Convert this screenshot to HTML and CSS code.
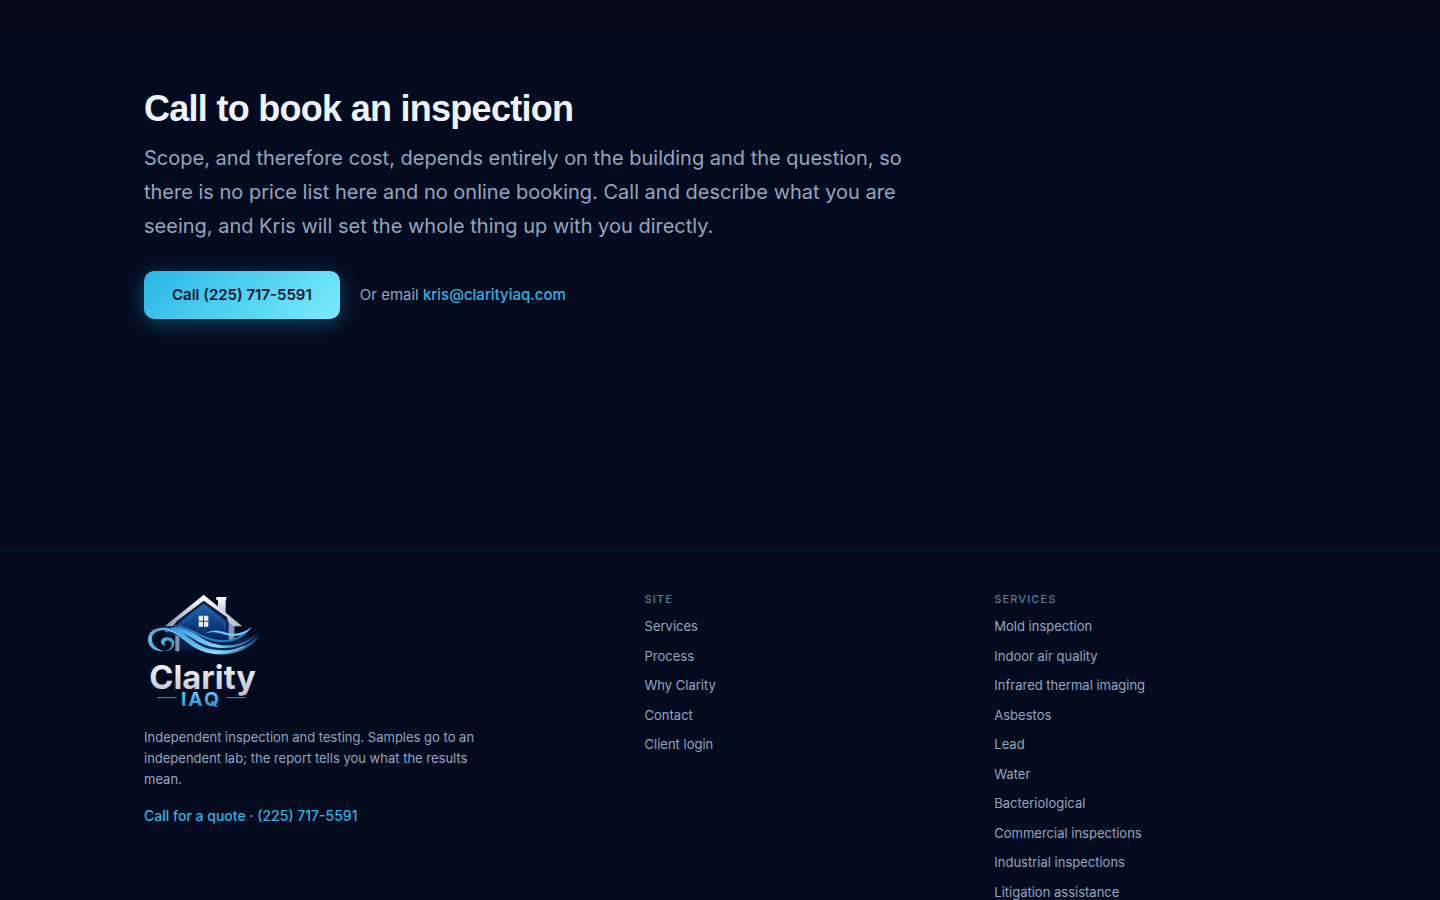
FILE: index.html
```html
<!DOCTYPE html>
<html lang="en">
<head>
<meta charset="utf-8">
<meta name="viewport" content="width=device-width, initial-scale=1">
<title>Clarity IAQ</title>
<link rel="stylesheet" href="styles.css">
</head>
<body>
<main class="cta">
  <div class="wrap">
    <h2 class="cta-title">Call to book an inspection</h2>
    <p class="cta-text">Scope, and therefore cost, depends entirely on the building and the question, so there is no price list here and no online booking. Call and describe what you are seeing, and Kris will set the whole thing up with you directly.</p>
    <div class="cta-row">
      <a class="btn" href="tel:+12257175591">Call (225) 717-5591</a>
      <p class="cta-alt">Or email <a class="accent" href="mailto:kris@clarityiaq.com">kris@clarityiaq.com</a></p>
    </div>
  </div>
</main>
<footer class="footer">
  <div class="wrap footer-grid">
    <div class="brand">
      <svg class="logo" viewBox="42 33 360 360" role="img" aria-label="Clarity IAQ">
        <defs>
          <linearGradient id="silver" x1="0" y1="0" x2="0" y2="1"><stop offset="0" stop-color="#fff"/><stop offset="1" stop-color="#b9bfd0"/></linearGradient>
          <linearGradient id="roof" x1="0" y1="0" x2="1" y2="0"><stop offset="0" stop-color="#7d92b6"/><stop offset=".5" stop-color="#fff"/><stop offset="1" stop-color="#a5b1cb"/></linearGradient>
          <linearGradient id="wall" x1="0" y1="0" x2="0" y2="1"><stop offset="0" stop-color="#2268b4"/><stop offset=".5" stop-color="#0e3a7c"/><stop offset="1" stop-color="#051536"/></linearGradient>
          <linearGradient id="wave" gradientUnits="userSpaceOnUse" x1="54" y1="0" x2="392" y2="0"><stop offset="0" stop-color="#58bdf0"/><stop offset=".25" stop-color="#3f9fdf"/><stop offset=".6" stop-color="#7bd8fb"/><stop offset="1" stop-color="#174f86"/></linearGradient>
          <linearGradient id="sea" x1="0" y1="0" x2="0" y2="1"><stop offset="0" stop-color="#7fe0fc"/><stop offset="1" stop-color="#1181d2"/></linearGradient>
        </defs>
        <path fill="url(#silver)" d="M259 51h30v8h-2v43l-23-22V60h-5z"/>
        <path fill="url(#wall)" d="M221 64l92 72v78H136v-78z"/>
        <path fill="#8292b3" d="M296 124h17v84l-17-8zM136 136h12v78h-12z"/>
        <path fill="url(#roof)" d="M221 44l116 95h-27l-19-18v-9l-70-50-80 61-12 16h-25z"/>
        <path fill="none" stroke="#061a42" stroke-width="5" d="M142 150v-22l79-61 70 53v30"/>
        <path fill="none" stroke="#2a75c0" stroke-width="2" d="M152 150v-16l69-52 62 46v20"/>
        <path fill="#e9edf2" d="M206 107h13v15h-13zM222 107h13v15h-13zM206 125h13v15h-13zM222 125h13v15h-13z"/>
        <path fill="#06224f" d="M102 154c58-30 100 0 144 20 50 14 100 4 140-14-30 50-94 72-152 54-48-14-78-56-130-52z"/>
        <path fill="url(#wave)" d="M103 213C74 217 53 200 54 177c2-30 34-38 64-33 52 9 71 53 126 64 58 10 110-6 147-45-24 41-80 66-140 59-66-8-88-52-134-69-28-9-50 0-51 23-1 18 13 32 37 37z"/>
        <path fill="url(#wave)" d="M103 213c22-1 31-27 13-31-10-2-17 8-9 15-18 0-20-21 0-25 37-5 34 43-4 41z"/>
        <path fill="url(#wave)" d="M101 156c54-34 92 8 128 26 56 27 114 13 150-19-30 38-92 50-146 34-45-13-72-54-132-41z"/>
        <path fill="#2679c0" d="M102 152c46-28 84-3 118 14 58 27 108 15 146-28-26 49-86 60-140 38-41-17-76-44-124-24z"/>
        <path fill="#6fcafa" d="M225 161c37-22 58 2 87 0 22-2 39-9 53-21-14 20-34 31-64 27-28-4-44-17-76-6z"/>
        <path fill="none" stroke="#9de7ff" stroke-width="2" d="M70 162c24-24 63-11 87 11 22 20 46 37 78 42 34 5 72 0 107-17"/>
        <text class="logo-name" x="58" y="326" fill="url(#silver)">Clarity</text>
        <text class="logo-sub" x="153" y="378" fill="url(#sea)">IAQ</text>
        <path stroke="#3f91c4" stroke-width="3" d="M81 353h59M290 353h56"/>
      </svg>
      <p class="brand-text">Independent inspection and testing. Samples go to an independent lab; the report tells you what the results mean.</p>
      <a class="accent quote" href="tel:+12257175591">Call for a quote · (225) 717-5591</a>
    </div>
    <nav class="links" aria-labelledby="site-h">
      <h3 class="links-title" id="site-h">SITE</h3>
      <a href="#">Services</a>
      <a href="#">Process</a>
      <a href="#">Why Clarity</a>
      <a href="#">Contact</a>
      <a href="#">Client login</a>
    </nav>
    <nav class="links" aria-labelledby="services-h">
      <h3 class="links-title" id="services-h">SERVICES</h3>
      <a href="#">Mold inspection</a>
      <a href="#">Indoor air quality</a>
      <a href="#">Infrared thermal imaging</a>
      <a href="#">Asbestos</a>
      <a href="#">Lead</a>
      <a href="#">Water</a>
      <a href="#">Bacteriological</a>
      <a href="#">Commercial inspections</a>
      <a href="#">Industrial inspections</a>
      <a href="#">Litigation assistance</a>
    </nav>
  </div>
</footer>
</body>
</html>
```
FILE: styles.css
```css
* { box-sizing: border-box; }
body {
  margin: 0;
  background: #050b1e;
  color: #94a6c0;
  font-family: Inter, "Liberation Sans", sans-serif;
  font-size: 15px;
}
h2, h3, p { margin: 0; }
a { color: inherit; text-decoration: none; }
.wrap { max-width: 1200px; margin: 0 auto; padding: 0 24px; }
.cta { padding: 88px 0 231px; background: linear-gradient(#040a1a, #050b1e 40px); }
.cta-title {
  color: #eef4ff;
  font: 700 36px/41px "Liberation Sans", Arial, sans-serif;
  letter-spacing: -0.02em;
}
.cta-text { max-width: 760px; margin-top: 12px; font-size: 20px; line-height: 34px; }
.cta-row { display: flex; flex-wrap: wrap; align-items: center; gap: 20px; margin-top: 28px; }
.btn {
  padding: 12px 28px;
  border-radius: 10px;
  background: linear-gradient(135deg, #29b6e8, #7aebfa);
  box-shadow: 0 4px 20px rgba(41, 182, 232, 0.35);
  color: #04142c;
  font-weight: 600;
  line-height: 24px;
}
.cta-alt { line-height: 24px; }
.accent { color: #29b6e8; font-weight: 500; }
.footer { border-top: 1px solid #0c2434; padding: 40px 0 48px; }
.footer-grid { display: grid; grid-template-columns: 3fr 2fr 2fr; gap: 48px; }
.logo { display: block; width: 120px; height: 120px; }
.logo-name { font: 700 98px Inter, sans-serif; }
.logo-sub { font: 700 58px Inter, sans-serif; letter-spacing: 0.1em; }
.brand-text { max-width: 340px; margin-top: 16px; font-size: 13px; line-height: 21px; }
.quote { display: block; margin-top: 14px; font-size: 14px; line-height: 24px; }
.links { display: flex; flex-direction: column; align-items: flex-start; gap: 10px; font-size: 13px; line-height: 1.5; }
.links-title { color: #64789a; font-size: 11px; font-weight: 500; line-height: 16px; letter-spacing: 0.1em; }
```
